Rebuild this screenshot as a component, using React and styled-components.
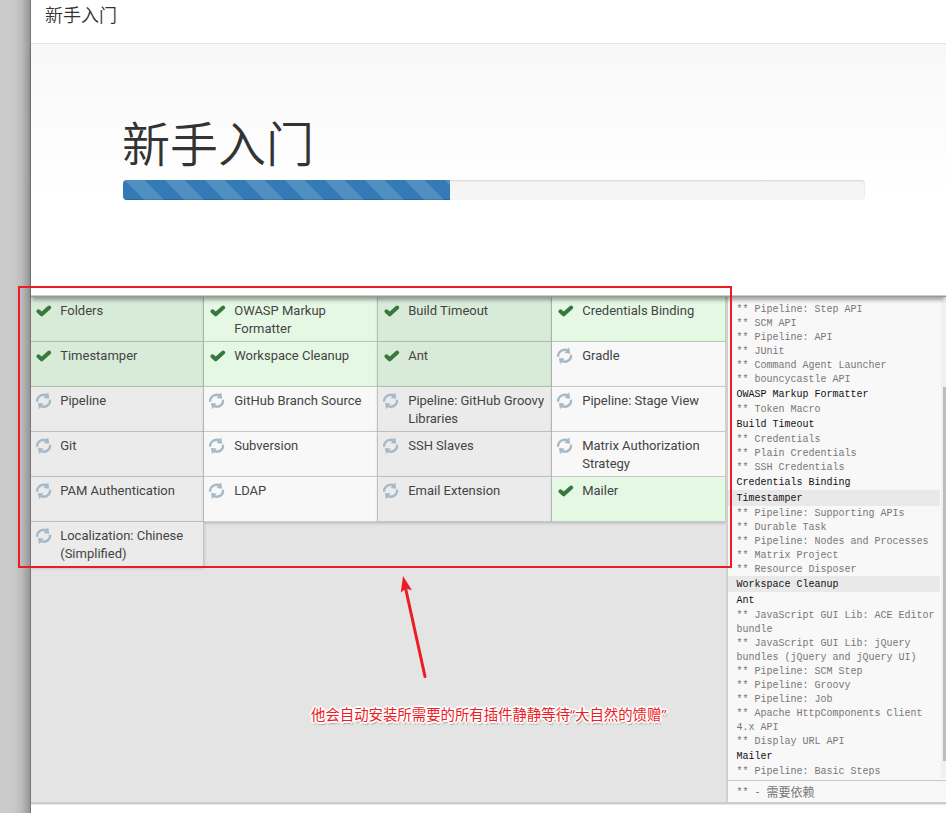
import React from "react";
import styled, { createGlobalStyle, css } from "styled-components";

const GlobalStyle = createGlobalStyle`
  * { box-sizing: border-box; }
  html, body { margin: 0; padding: 0; }
  body { overflow: hidden; background: #ccc; font-family: Roboto, "Noto Sans CJK SC", sans-serif; color: #333; }
`;

const Page = styled.div`
  position: relative;
  display: flex;
  width: 946px;
  height: 813px;
  overflow: hidden;
  background: #ccc;
`;

const Backdrop = styled.div`
  flex: 0 0 31px;
  border-right: 1px solid #777;
  background: linear-gradient(to right, #ccc 0, #c9c9c9 14px, #bdbdbd 21px, #a8a8a8 26px, #969696 30px);
`;

const Dialog = styled.main`
  flex: 1;
  min-width: 0;
  display: flex;
  flex-direction: column;
  background: #fff;
`;

const Header = styled.header`
  flex: 0 0 44px;
  padding: 3px 14px 0;
  border-bottom: 1px solid #e3e3e3;
  font-size: 18px;
  line-height: 26px;
  font-weight: 350;
`;

const Hero = styled.section`
  flex: 0 0 253px;
  padding: 71px 81px 0 91px;
  border-bottom: 1px solid #999;
  background: linear-gradient(#f8f8f8, #fff 150px);
  box-shadow: inset 0 -1px #ccc, 0 4px 4px -1px rgba(0, 0, 0, 0.35);
  z-index: 1;
`;

const Title = styled.h1`
  margin: 0 0 3px;
  height: 62px;
  font-size: 48px;
  line-height: 61px;
  font-weight: 350;
`;

const Track = styled.div`
  height: 20px;
  margin-left: 1px;
  border-radius: 4px;
  background: #f5f5f5;
  box-shadow: inset 0 1px 2px rgba(0, 0, 0, 0.12);
  overflow: hidden;
`;

const Progress = styled.div`
  width: 327px;
  height: 100%;
  background-color: #337ab7;
  background-image: linear-gradient(45deg, rgba(255, 255, 255, 0.15) 25%, transparent 25%, transparent 50%, rgba(255, 255, 255, 0.15) 50%, rgba(255, 255, 255, 0.15) 75%, transparent 75%, transparent);
  background-size: 40px 40px;
  background-position: 2px 0;
  box-shadow: inset 0 -1px 0 rgba(0, 0, 0, 0.15);
`;

const Panel = styled.section`
  flex: 0 0 507px;
  height: 507px;
  min-height: 0;
  display: flex;
  border-bottom: 2px solid #ccc;
  background: #e4e4e4;
`;

const PluginArea = styled.div`
  flex: 0 0 695px;
  overflow: hidden;
`;

const PluginGrid = styled.div`
  display: grid;
  grid-template-columns: repeat(4, 174px);
  grid-auto-rows: 45px;
  margin-left: -1px;
`;

const StatusIcon = styled.svg`
  flex: 0 0 20px;
  width: 20px;
  height: 20px;
  margin: 3px 5.2px 0 4px;
`;

const Plugin = styled.div`
  display: flex;
  padding-left: 1px;
  border-right: 1px solid rgba(0, 0, 0, 0.16);
  border-bottom: 1px solid rgba(0, 0, 0, 0.16);
  box-shadow: 0 1px 3px rgba(0, 0, 0, 0.22);
  background: #f8f8f8;
  color: #444;
  font-size: 13px;
  line-height: 18px;

  &:nth-child(odd) { background: #ebebeb; }
  &:not(:nth-child(4n + 1)) ${StatusIcon} { ${(p) => !p.$done && css`transform: translateX(-1px);`} }

  ${(p) => p.$done && css`
    background: #e4f8e4;
    &:nth-child(odd) { background: #d8ebd8; }
  `}
`;

const PluginName = styled.span`
  width: 140px;
  padding-top: 5px;
`;

const LogPanel = styled.aside`
  flex: 1;
  min-width: 0;
  display: flex;
  flex-direction: column;
  border-left: 2px solid #d0d0d0;
  background: #f8f8f8;
  font-family: "Liberation Mono", "Noto Sans CJK SC", monospace;
  font-size: 10px;
`;

const LogBody = styled.div`
  flex: 0 0 483px;
  height: 483px;
  display: flex;
`;

const LogLines = styled.div`
  flex: 0 0 212px;
  padding-top: 5px;
`;

const LogLine = styled.div`
  padding: ${(p) => (p.$main ? 1 : 2)}px 0 0 8.5px;
  height: ${(p) => (p.$main ? 16 : 14)}px;
  line-height: ${(p) => (p.$main ? 15 : 12)}px;
  color: ${(p) => (p.$main ? "#111" : "#777")};
  background: ${(p) => (p.$shaded ? "#e9e9e9" : "transparent")};
  white-space: pre;
`;

const ScrollTrack = styled.div`
  flex: 1;
  margin: 4px 0 2px 1px;
  padding: 86px 0 0 2px;
  background: #f0f0f0;
`;

const ScrollThumb = styled.div`
  height: 374px;
  background: #bdbdbd;
`;

const Legend = styled.div`
  flex: 0 0 22px;
  height: 22px;
  padding: 2px 0 0 8.5px;
  display: flex;
  align-items: center;
  border-top: 1px solid #c8c8c8;
  color: #777;
  line-height: 20px;
  white-space: pre;
`;

const LegendText = styled.span`
  margin-top: -2px;
  font-family: "Noto Sans CJK SC", sans-serif;
  font-size: 12px;
`;

const Footer = styled.footer`
  flex: 1;
  border-top: 1px solid #e8e8e8;
  background: #fff;
`;

const AnnotationLayer = styled.svg`
  position: absolute;
  inset: 0;
  z-index: 2;
  width: 946px;
  height: 813px;
`;

const Note = styled.div`
  position: absolute;
  z-index: 3;
  left: 311px;
  top: 704px;
  font-family: "Open Sans", "Noto Sans CJK SC", sans-serif;
  font-size: 14.4px;
  line-height: 22px;
  color: #ed1c24;
  white-space: nowrap;
  text-shadow: -1px -1px #fff, 1px -1px #fff, -1px 1px #fff, 1px 1px #fff, 0 -2px 1px #fff,
    2px 0 #fff, -2px 0 #fff, 0 2px #fff, 1px 3px 1px #aaa;
`;

const CheckIcon = () => (
  <StatusIcon viewBox="0 0 20 20">
    <path d="M3.4 11.3 L6.7 14.3 L14.2 7.5" fill="none" stroke="#39783c" strokeWidth="4" strokeLinecap="round" strokeLinejoin="round" />
  </StatusIcon>
);

const SyncIcon = () => (
  <StatusIcon viewBox="0 0 20 20">
    <g fill="none" stroke="#a5b9c8" strokeWidth="2.4">
      <path d="M2.2 11.8 C1.5 8.2 4.6 4.8 8.6 4.8 C10.3 4.8 11.6 5.3 12.6 6" />
      <path d="M15 9.8 C15.7 13.4 12.6 16.8 8.6 16.8 C6.9 16.8 5.6 16.3 4.6 15.6" />
    </g>
    <path d="M13.2 2.3 L14.2 8.7 L8.6 8Z M4 19.3 L3 12.9 L8.6 13.6Z" fill="#a5b9c8" />
  </StatusIcon>
);

const plugins = [
  ["Folders", 1], ["OWASP Markup Formatter", 1], ["Build Timeout", 1], ["Credentials Binding", 1],
  ["Timestamper", 1], ["Workspace Cleanup", 1], ["Ant", 1], ["Gradle", 0],
  ["Pipeline", 0], ["GitHub Branch Source", 0], ["Pipeline: GitHub Groovy Libraries", 0], ["Pipeline: Stage View", 0],
  ["Git", 0], ["Subversion", 0], ["SSH Slaves", 0], ["Matrix Authorization Strategy", 0],
  ["PAM Authentication", 0], ["LDAP", 0], ["Email Extension", 0], ["Mailer", 1],
  ["Localization: Chinese (Simplified)", 0],
];

const log = [
  "** Pipeline: Step API", "** SCM API", "** Pipeline: API", "** JUnit", "** Command Agent Launcher",
  "** bouncycastle API", "#OWASP Markup Formatter", "** Token Macro", "#Build Timeout", "** Credentials",
  "** Plain Credentials", "** SSH Credentials", "#Credentials Binding", "#Timestamper",
  "** Pipeline: Supporting APIs", "** Durable Task", "** Pipeline: Nodes and Processes", "** Matrix Project",
  "** Resource Disposer", "#Workspace Cleanup", "#Ant", "** JavaScript GUI Lib: ACE Editor", "bundle",
  "** JavaScript GUI Lib: jQuery", "bundles (jQuery and jQuery UI)", "** Pipeline: SCM Step",
  "** Pipeline: Groovy", "** Pipeline: Job", "** Apache HttpComponents Client", "4.x API",
  "** Display URL API", "#Mailer", "** Pipeline: Basic Steps",
];
const shaded = ["#Timestamper", "#Workspace Cleanup"];

export default function App() {
  return (
    <>
      <GlobalStyle />
      <Page>
        <Backdrop />
        <Dialog>
          <Header>新手入门</Header>
          <Hero>
            <Title>新手入门</Title>
            <Track><Progress /></Track>
          </Hero>
          <Panel>
            <PluginArea>
              <PluginGrid>
                {plugins.map(([name, done]) => (
                  <Plugin key={name} $done={!!done}>
                    {done ? <CheckIcon /> : <SyncIcon />}
                    <PluginName>{name}</PluginName>
                  </Plugin>
                ))}
              </PluginGrid>
            </PluginArea>
            <LogPanel>
              <LogBody>
                <LogLines>
                  {log.map((line) => (
                    <LogLine key={line} $main={line[0] === "#"} $shaded={shaded.includes(line)}>
                      {line.replace("#", "")}
                    </LogLine>
                  ))}
                </LogLines>
                <ScrollTrack><ScrollThumb /></ScrollTrack>
              </LogBody>
              <Legend>** - <LegendText>需要依赖</LegendText></Legend>
            </LogPanel>
          </Panel>
          <Footer />
        </Dialog>
        <AnnotationLayer viewBox="0 0 946 813">
          <rect x="19" y="287" width="712" height="280" fill="none" stroke="#ed1c24" strokeWidth="2" />
          <path d="M425 676.5 L405.5 588" stroke="#ed1c24" strokeWidth="3" strokeLinecap="round" fill="none" />
          <path d="M403 576 L412 590.3 L406 588.5 L400.8 592.5Z" fill="#ed1c24" />
        </AnnotationLayer>
        <Note>他会自动安装所需要的所有插件静静等待“大自然的馈赠”</Note>
      </Page>
    </>
  );
}
